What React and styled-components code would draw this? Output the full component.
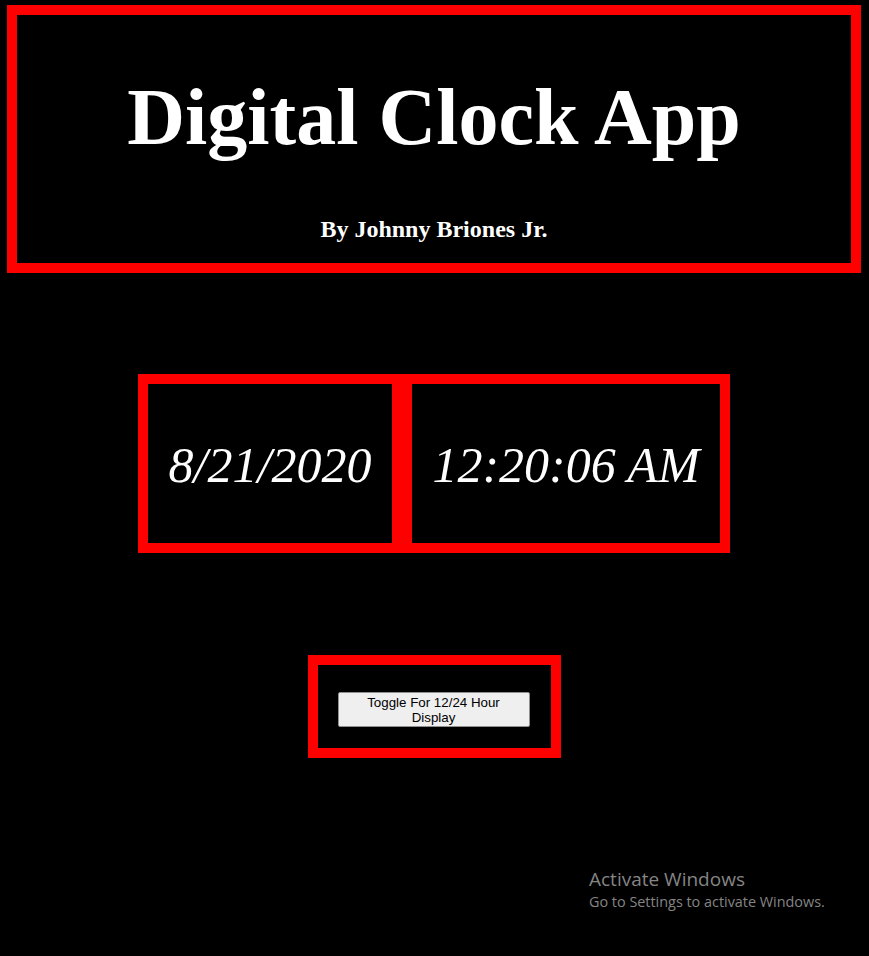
import React, { useState } from 'react';
import styled, { createGlobalStyle } from 'styled-components';

const GlobalStyle = createGlobalStyle`
  html, body {
    margin: 0;
    padding: 0;
    background: #000;
    font-family: 'Liberation Serif', 'Times New Roman', serif;
  }
`;

const Page = styled.div`
  position: relative;
  min-height: 956px;
  padding: 5px 1px 0 0;
  box-sizing: border-box;
  color: #fff;
`;

const Header = styled.header`
  width: 854px;
  margin: 0 0 0 7px;
  box-sizing: border-box;
  border: 10px solid #ff0000;
  padding: 56px 0 20px;
  text-align: center;
`;

const Title = styled.h1`
  margin: 0 0 53px;
  font-size: 80px;
  font-weight: bold;
  line-height: 92px;
`;

const Byline = styled.h2`
  margin: 0;
  font-size: 24px;
  font-weight: bold;
  line-height: 27px;
`;

const ClockRow = styled.div`
  display: flex;
  justify-content: center;
  margin-top: 101px;
`;

const ClockBox = styled.div`
  width: ${(p) => p.$width}px;
  box-sizing: border-box;
  border: 10px solid #ff0000;
  padding: 53px 0 49px;
  font-size: 50px;
  font-style: italic;
  line-height: 57px;
  text-align: center;
  white-space: nowrap;
`;

const ToggleWrap = styled.div`
  display: flex;
  justify-content: center;
  margin-top: 102px;
`;

const ToggleBox = styled.div`
  width: 253px;
  box-sizing: border-box;
  border: 10px solid #ff0000;
  padding: 27px 20px 21px;
`;

const ToggleButton = styled.button`
  display: block;
  width: 192px;
  height: 35px;
  padding: 1px 6px;
  box-sizing: border-box;
  background: #efefef;
  border: 1px solid #8f8f8f;
  border-radius: 2px;
  font-family: 'Liberation Sans', Arial, sans-serif;
  font-size: 13.33px;
  line-height: 15px;
  color: #000;
  cursor: pointer;
`;

const Watermark = styled.div`
  position: absolute;
  left: 589px;
  top: 867px;
  font-family: 'Open Sans', 'Noto Sans', sans-serif;
  color: #858585;
  pointer-events: none;
`;

const WatermarkTitle = styled.div`
  font-size: 19px;
  line-height: 25px;
`;

const WatermarkText = styled.div`
  font-size: 14.4px;
  line-height: 20px;
`;

export default function App() {
  const [twelveHour, setTwelveHour] = useState(true);

  return (
    <Page>
      <GlobalStyle />
      <Header>
        <Title>Digital Clock App</Title>
        <Byline>By Johnny Briones Jr.</Byline>
      </Header>

      <ClockRow>
        <ClockBox $width={264}>8/21/2020</ClockBox>
        <ClockBox $width={328}>{twelveHour ? '12:20:06 AM' : '00:20:06'}</ClockBox>
      </ClockRow>

      <ToggleWrap>
        <ToggleBox>
          <ToggleButton onClick={() => setTwelveHour(!twelveHour)}>
            Toggle For 12/24 Hour Display
          </ToggleButton>
        </ToggleBox>
      </ToggleWrap>

      <Watermark>
        <WatermarkTitle>Activate Windows</WatermarkTitle>
        <WatermarkText>Go to Settings to activate Windows.</WatermarkText>
      </Watermark>
    </Page>
  );
}
